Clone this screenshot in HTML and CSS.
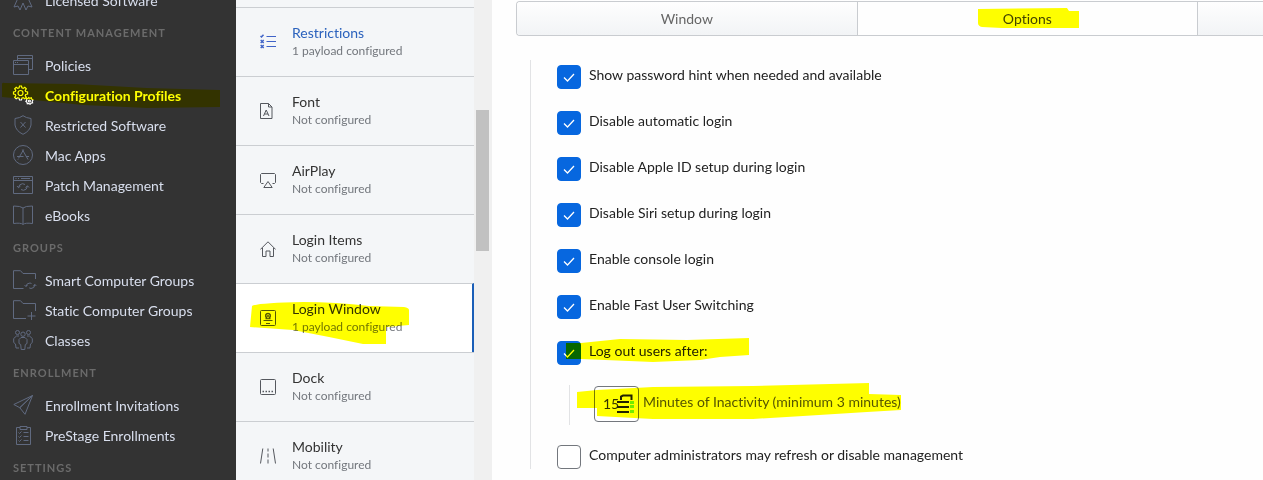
FILE: index.html
```html
<!DOCTYPE html>
<html lang="en">
<head>
    <meta charset="UTF-8">
    <meta name="viewport" content="width=device-width, initial-scale=1.0">
    <title>Configuration Profiles</title>
    <link rel="stylesheet" href="styles.css">
</head>
<body>
    <div class="app">
        <nav class="sidebar">
            <div class="sidebar-scroll">
                <a class="nav-item" href="#">
                    <svg class="nav-icon" viewBox="0 0 24 20"><path d="M5 6l3 3h4l3-3M5 8L1 17l4-1 2 4 3-7M15 8l4 9-4-1-2 4-3-7"/></svg>
                    Licensed Software
                </a>
                <h2 class="nav-heading">Content Management</h2>
                <a class="nav-item" href="#">
                    <svg class="nav-icon" viewBox="0 0 24 20"><path d="M.5 5.500h15v14H.5zM.5 9.500h15M4.500 5.500v-5h15v14h-4M4.500 3.500h15M2 7.500h1M4 7.500h1"/></svg>
                    Policies
                </a>
                <a class="nav-item active" href="#">
                    <svg class="nav-icon" viewBox="0 0 24 20">
                        <path d="M6.500 1h2l.4 1.900 1.300.5L11.800 2.300l1.500 1.500-1.100 1.600.5 1.200 1.900.4v2l-1.900.4-.5 1.300 1.100 1.600-1.500 1.400-1.600-1-1.300.5L8.500 15h-2l-.4-1.800-1.300-.5-1.600 1-1.500-1.400 1.100-1.600-.5-1.300L.5 9V7l1.800-.4.5-1.200-1.100-1.600 1.500-1.500 1.600 1.100 1.300-.5z"/>
                        <circle cx="7.500" cy="8" r="2.500"/>
                        <path d="M15.500 12.500l1.300.8 1.500-.6.5 1.500 1.200.8-.8 1.300.4 1.500-1.500.3-1 1.200-1.300-.9-1.500.4-.3-1.500-1.100-1 .9-1.200-.2-1.600 1.500-.1z"/>
                        <circle cx="16.400" cy="16" r="1"/>
                    </svg>
                    Configuration Profiles
                    <svg class="marker marker-nav" viewBox="0 0 236 30" preserveAspectRatio="none"><path d="M2 4Q2 2 5 3L75 4 147 8 220 10V27L147 28 83 25 33 20 2 17z"/></svg>
                </a>
                <a class="nav-item" href="#">
                    <svg class="nav-icon" viewBox="0 0 24 20"><path d="M10 .7Q13 3 18 3.500V10Q17 16 10 19.300 3 16 2 10V3.500Q7 3 10 .7zM7.500 7l5 5.500M12.500 7l-5 5.500"/></svg>
                    Restricted Software
                </a>
                <a class="nav-item" href="#">
                    <svg class="nav-icon" viewBox="0 0 24 20"><circle cx="10" cy="10" r="9.500"/><path d="M9.300 4.500l5.700 10M10.700 4.500L5.700 13M4 11.500h6.500M13 11.500h3M5 14.500l.5-.8"/></svg>
                    Mac Apps
                </a>
                <a class="nav-item" href="#">
                    <svg class="nav-icon" viewBox="0 0 24 20"><path d="M.5 1.500h19v17H.5zM.5 5.500h19M2.500 3.500h1M5 3.500h1M8 3.500h9M5.500 12.500Q6 9 9.500 8.700l2.500.8M4 11l1.500 1.700L7.500 11M14.500 11Q14 15 10.500 15.300L8 14.500M12.500 12.500l2-1.700 1.500 1.700"/></svg>
                    Patch Management
                </a>
                <a class="nav-item" href="#">
                    <svg class="nav-icon" viewBox="0 0 24 20"><path d="M10 3Q8 1 .5 1v17.500Q8 17.500 10 19.500 12 17.500 19.500 18.500V1Q12 1 10 3zM10 3v16"/></svg>
                    eBooks
                </a>
                <h2 class="nav-heading">Groups</h2>
                <a class="nav-item" href="#">
                    <svg class="nav-icon" viewBox="0 0 24 20"><path d="M10.500 18.500H.5V.7h7L10 3.500h12.500V9M13 16.500q.5-3.500 4-3.500l1.500.5M11.500 15l1.500 1.500 1.500-1.500M22 14.500q-.5 4-4 4l-1.800-.6M20.200 16l1.800-1.500 1.300 1.500"/></svg>
                    Smart Computer Groups
                </a>
                <a class="nav-item" href="#">
                    <svg class="nav-icon" viewBox="0 0 24 20"><path d="M13 18.500H.5V.7h7L10 3.500h12.500V11M18.500 12v8M14.500 16h8"/></svg>
                    Static Computer Groups
                </a>
                <a class="nav-item" href="#">
                    <svg class="nav-icon" viewBox="0 0 24 20"><circle cx="10" cy="4.200" r="2.200"/><circle cx="4.500" cy="2.500" r="2"/><circle cx="15.500" cy="2.500" r="2"/><path d="M8 7.500h4l2 2v4l-1.700 1-.5 5H8.200l-.5-5L6 13.500v-4zM6 6H3.500L.7 8.500v4L2.500 14l.5 4h3M14 6h2.500l2.800 2.500v4L17.500 14l-.5 4h-3"/></svg>
                    Classes
                </a>
                <h2 class="nav-heading">Enrollment</h2>
                <a class="nav-item" href="#">
                    <svg class="nav-icon" viewBox="0 0 24 20"><path d="M19.500.5L.8 9.500l6 3.200zM19.500.5L12 19.300 6.800 12.700z"/></svg>
                    Enrollment Invitations
                </a>
                <a class="nav-item" href="#">
                    <svg class="nav-icon" viewBox="0 0 24 20"><path d="M7 2.500H3.500v17h14v-17H14M7 1.500h7v3H7zM5.500 7.500l1 1L8.500 6.500M10.500 7.500h5M5.500 11.500l1 1 2-2M10.500 11.500h5M5.500 15.500l1 1 2-2M10.500 15.500h5"/></svg>
                    PreStage Enrollments
                </a>
                <h2 class="nav-heading">Settings</h2>
            </div>
        </nav>

        <div class="payloads">
            <div class="payload-list">
                <a class="payload configured" href="#">
                    <svg class="payload-icon" viewBox="0 0 16 16"><path d="M6.500 2.500H16M6.500 7.500H16M6.500 12.500H16"/><path class="bold" d="M.5 2l1 1L3.500.8M.7 6l3 3M3.700 6l-3 3M.7 11l3 3M3.700 11l-3 3"/></svg>
                    <span class="payload-text"><span class="payload-name">Restrictions</span><span class="payload-state">1 payload configured</span></span>
                </a>
                <a class="payload" href="#">
                    <svg class="payload-icon" viewBox="0 0 16 16"><path d="M.5.5h8l3.500 3.500v11.500H.5zM8.500.5V4H12M3.500 13l2.700-6 2.800 6M4.400 11H8"/></svg>
                    <span class="payload-text"><span class="payload-name">Font</span><span class="payload-state">Not configured</span></span>
                </a>
                <a class="payload" href="#">
                    <svg class="payload-icon" viewBox="0 0 16 16"><path d="M3.500 11.500H1.500L.5 10.500V2.500l1-1h13l1 1v8l-1 1h-2M8 9.500L3.800 15.500h8.400z"/></svg>
                    <span class="payload-text"><span class="payload-name">AirPlay</span><span class="payload-state">Not configured</span></span>
                </a>
                <a class="payload" href="#">
                    <svg class="payload-icon" viewBox="0 0 16 16"><path d="M.3 8.500L8 .8l7.700 7.700M2.500 7v8.500h3.500V10h4v5.500h3.500V7"/></svg>
                    <span class="payload-text"><span class="payload-name">Login Items</span><span class="payload-state">Not configured</span></span>
                </a>
                <a class="payload selected" href="#">
                    <svg class="payload-icon" viewBox="0 0 16 16"><rect x=".5" y=".5" width="15" height="15" rx="1"/><path d="M3.500 10.500h9M6 13.500h4"/><path class="bold" d="M5.500 8.500H7L5.800 6.500V4.800Q6.200 3.500 8 3.500T10.200 4.800V6.500L9 8.500h1.500M8 5v2"/></svg>
                    <span class="payload-text"><span class="payload-name">Login Window</span><span class="payload-state">1 payload configured</span></span>
                    <svg class="marker marker-payload" viewBox="0 0 180 68"><path d="M16 22Q20 19 67 18 100 18 133 22L168 23Q173 24 173 26V41L150 43V60H127L93 53 57 46 14 43z"/></svg>
                </a>
                <a class="payload" href="#">
                    <svg class="payload-icon" viewBox="0 0 16 16"><rect x=".5" y=".5" width="15" height="15" rx="1"/><path class="bold" d="M2.500 12.500H4M5.500 12.500H7M8.500 12.500H10M11.500 12.500H13"/></svg>
                    <span class="payload-text"><span class="payload-name">Dock</span><span class="payload-state">Not configured</span></span>
                </a>
                <a class="payload" href="#">
                    <svg class="payload-icon" viewBox="0 0 16 16"><path d="M2.800.5L.5 15.500M13.200.5l2.300 15M8 .5v3M8 5.500v4M8 11.500v4"/></svg>
                    <span class="payload-text"><span class="payload-name">Mobility</span><span class="payload-state">Not configured</span></span>
                </a>
            </div>
            <div class="scroll-track"><div class="scroll-thumb"></div></div>
        </div>

        <main class="content">
            <div class="tabs">
                <button class="tab" type="button">Window</button>
                <button class="tab current" type="button">
                    <span class="tab-label">Options<svg class="marker marker-tab" viewBox="0 0 102 20"><path d="M0 1L89 0 91 3H101V20H24L4 19Q0 18 0 15z"/></svg></span>
                </button>
                <button class="tab" type="button" aria-label="Access"></button>
            </div>
            <form class="options">
                <label class="option"><input type="checkbox" checked> Show password hint when needed and available</label>
                <label class="option"><input type="checkbox" checked> Disable automatic login</label>
                <label class="option"><input type="checkbox" checked> Disable Apple ID setup during login</label>
                <label class="option"><input type="checkbox" checked> Disable Siri setup during login</label>
                <label class="option"><input type="checkbox" checked> Enable console login</label>
                <label class="option"><input type="checkbox" checked> Enable Fast User Switching</label>
                <label class="option"><input type="checkbox" checked> Log out users after:
                    <svg class="marker marker-logout" viewBox="0 0 200 30"><path d="M9 5L24 5 63 1 130 2 192 0V17L163 19 143 22 96 24 24 21H9z"/></svg>
                </label>
                <div class="suboption">
                    <span class="minutes">
                        <input type="text" id="minutes" value="15">
                        <svg class="lock" viewBox="0 0 18 20">
                            <path d="M4 6V2.500L6 1.500h8.500V6" fill="none" stroke="#222" stroke-width="2"/>
                            <path d="M0 7h12v2H0zM0 12h12v2H0zM0 17h12v2H0z" fill="#222"/>
                            <path d="M13 7h4v3h-4zM13 11h4v3h-4zM13 16h4v3h-4z" fill="#72ec45"/>
                        </svg>
                    </span>
                    <label for="minutes">Minutes of Inactivity (minimum 3 minutes)</label>
                    <svg class="marker marker-minutes" viewBox="0 0 340 40"><path d="M7 7L27 5 83 2 183 1 299-2V9L331 10V25L297 27 233 31 183 34H83L27 31V23H7z"/></svg>
                </div>
                <label class="option"><input type="checkbox"> Computer administrators may refresh or disable management</label>
            </form>
        </main>
    </div>
</body>
</html>
```
FILE: styles.css
```css
* {
    box-sizing: border-box;
}
body {
    margin: 0;
    font-family: Lato, "Open Sans", sans-serif;
    font-size: 14px;
    font-variant-ligatures: none;
    color: #333;
    background-color: #fefefe;
}
a {
    color: inherit;
    text-decoration: none;
}
.app {
    display: flex;
    height: 100vh;
    overflow: hidden;
}

/* Sidebar */
.sidebar {
    flex: 0 0 236px;
    overflow: hidden;
    background-color: #333;
}
.sidebar-scroll {
    margin-top: -15px;
}
.nav-item {
    position: relative;
    display: flex;
    align-items: center;
    gap: 8px;
    height: 30px;
    padding-left: 13px;
    color: #d9dfee;
}
.nav-item.active {
    color: #fff;
    font-weight: bold;
}
.nav-icon {
    width: 24px;
    height: 20px;
    fill: none;
    stroke: #606a80;
    stroke-width: 1;
    overflow: visible;
}
.nav-item.active .nav-icon {
    stroke: #fff;
    stroke-width: 1.2;
}
.nav-heading {
    margin: 0;
    padding-left: 13px;
    font-size: 11px;
    line-height: 35px;
    letter-spacing: 1px;
    text-transform: uppercase;
    color: #6b6b6b;
}

/* Payload list */
.payloads {
    flex: 0 0 256px;
    display: flex;
    justify-content: space-between;
    overflow: hidden;
    background-color: #f4f6f8;
}
.payload-list {
    flex: 1;
    padding-top: 7px;
}
.payload {
    position: relative;
    display: flex;
    align-items: center;
    gap: 16px;
    height: 69px;
    padding-left: 24px;
    border-top: 1px solid #cbced2;
}
.payload.selected {
    background-color: #fff;
    border-right: 2px solid #1b5fb8;
}
.payload-icon {
    width: 16px;
    height: 16px;
    fill: none;
    stroke: #55585e;
    stroke-width: 1;
}
.payload-icon .bold {
    stroke-width: 1.5;
}
.payload-text {
    display: flex;
    flex-direction: column;
    padding-bottom: 1px;
}
.payload-name {
    font-size: 14px;
    line-height: 18px;
}
.payload-state {
    font-size: 12px;
    line-height: 17px;
    color: #73777d;
}
.configured .payload-name {
    color: #2b62bd;
}
.configured .payload-icon {
    stroke: #3f63c8;
}
.scroll-track {
    flex: 0 0 18px;
    padding: 110px 3px 0 2px;
    background-color: #f0f0f0;
}
.scroll-thumb {
    height: 141px;
    background-color: #c1c1c1;
}

/* Options pane */
.content {
    flex: 1;
    min-width: 0;
    padding: 1px 0 0 24px;
}
.tabs {
    display: grid;
    grid-template-columns: 21fr 21fr 4fr;
    border: 1px solid #c9ccd0;
    border-right: 0;
    border-radius: 4px 0 0 4px;
    overflow: hidden;
}
.tab {
    height: 33px;
    padding: 0;
    border: 0;
    border-right: 1px solid #c9ccd0;
    background: linear-gradient(#fefefe, #f2f4f6);
    font: inherit;
    color: #666;
}
.tab:last-child {
    border-right: 0;
}
.tab.current {
    background: #fefefe;
    color: #444;
}
.tab-label {
    position: relative;
}
.options {
    margin: 24px 0 0 14px;
    padding: 5px 0 0 26px;
    border-left: 1px solid #e2e3e5;
    color: #222;
}
.option {
    position: relative;
    display: flex;
    gap: 8px;
    height: 24px;
    margin-bottom: 22px;
    line-height: 20px;
}
.option input {
    appearance: none;
    width: 24px;
    height: 24px;
    margin: 0;
    border: 1px solid #73777d;
    border-radius: 4px;
    background-color: #fff;
}
.option input:checked {
    border-color: #0767df;
    background: #0767df url("data:image/svg+xml,%3Csvg xmlns='http://www.w3.org/2000/svg' viewBox='0 0 12 9'%3E%3Cpath d='M1 4.500l3.500 3.500L11 1' fill='none' stroke='white' stroke-width='1.300'/%3E%3C/svg%3E") center / 12px 9px no-repeat;
}
.suboption {
    position: relative;
    display: flex;
    gap: 4px;
    height: 40px;
    margin: -2px 0 20px 12px;
    padding: 1px 0 0 24px;
    border-left: 1px solid #e2e3e5;
    line-height: 32px;
    color: #555;
}
.minutes {
    position: relative;
}
.minutes input {
    display: block;
    width: 45px;
    height: 36px;
    padding: 0 8px 2px;
    border: 1px solid #73777d;
    border-radius: 4px;
    background: #fff;
    font: inherit;
    color: #333;
}
.lock {
    position: absolute;
    top: 8px;
    right: 4px;
    width: 18px;
    height: 20px;
}

/* Highlighter strokes */
.marker {
    position: absolute;
    fill: #ff0;
    mix-blend-mode: multiply;
    overflow: visible;
    pointer-events: none;
}
.marker-nav {
    inset: 0;
    width: 100%;
    height: 100%;
}
.marker-payload {
    top: 0;
    left: 0;
    width: 180px;
    height: 68px;
}
.marker-tab {
    top: -2px;
    left: 50%;
    width: 102px;
    height: 20px;
    margin-left: -49px;
}
.marker-logout {
    top: -3px;
    left: 0;
    width: 200px;
    height: 30px;
}
.marker-minutes {
    top: 0;
    left: 0;
    width: 340px;
    height: 40px;
}
```
